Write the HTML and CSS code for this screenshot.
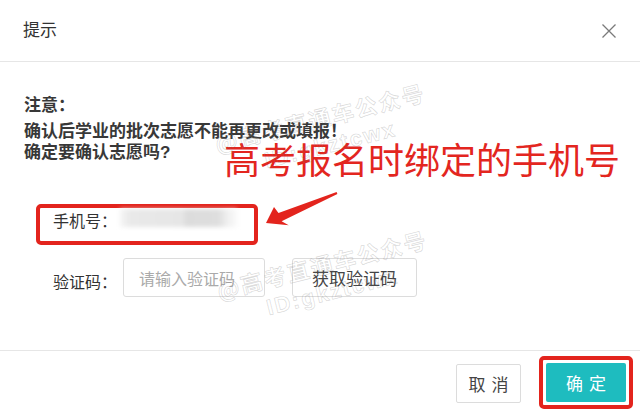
FILE: index.html
```html
<!DOCTYPE html>
<html lang="zh-CN">

<head>
  <meta charset="UTF-8">
  <meta name="viewport" content="width=device-width, initial-scale=1.0">
  <title>提示</title>
  <link rel="stylesheet" href="styles.css">
</head>

<body>
  <div class="dialog">
    <div class="dialog-header">
      <span class="dialog-title">提示</span>
      <svg class="close" width="16" height="16" viewBox="0 0 16 16">
        <path d="M1.5 1.5L14.5 14.5M14.5 1.5L1.5 14.5" />
      </svg>
    </div>

    <div class="dialog-body">
      <p class="note-title">注意：</p>
      <p class="note">确认后学业的批次志愿不能再更改或填报！</p>
      <p class="note">确定要确认志愿吗?</p>

      <div class="form">
        <div class="row phone-row">
          <span class="label">手机号：</span>
          <span class="phone-blur"></span>
        </div>
        <div class="row code-row">
          <span class="label">验证码：</span>
          <input class="code-input" type="text" placeholder="请输入验证码">
          <button class="btn-code">获取验证码</button>
        </div>
      </div>
    </div>

    <div class="dialog-footer">
      <button class="btn btn-cancel">取消</button>
      <div class="confirm-mark">
        <button class="btn btn-ok">确定</button>
      </div>
    </div>

    <!-- 标注 -->
    <div class="tip-text">高考报名时绑定的手机号</div>
    <svg class="tip-arrow" width="82" height="42" viewBox="0 0 82 42">
      <polygon points="6,35 14,19 18.5,25 76.6,4.1 77.4,5.9 21.6,33.3 28.7,37.3" />
    </svg>

    <!-- 水印 -->
    <div class="watermark wm-top">
      <div>@高考直通车公众号</div>
      <div class="wm-id">ID:gkztcwx</div>
    </div>
    <div class="watermark wm-bottom">
      <div>@高考直通车公众号</div>
      <div class="wm-id">ID:gkztcwx</div>
    </div>
  </div>
</body>

</html>
```

FILE: styles.css
```css
* {
  margin: 0;
  padding: 0;
  box-sizing: border-box;
}

body {
  font-family: "Noto Sans CJK SC", "Liberation Sans", sans-serif;
  color: #333;
  background: #fff;
}

.dialog {
  width: 640px;
  height: 412px;
  position: relative;
  overflow: hidden;
  display: flex;
  flex-direction: column;
}

/* 头部 */
.dialog-header {
  height: 62px;
  flex: none;
  border-bottom: 1px solid #e6e6e6;
  display: flex;
  align-items: center;
  justify-content: space-between;
  padding: 0 23px 4px 23px;
}

.dialog-title {
  font-size: 17px;
  color: #333;
}

.close {
  fill: none;
  stroke: #7a7a7a;
  stroke-width: 1.3;
  margin-top: 5px;
}

/* 内容 */
.dialog-body {
  flex: 1;
  padding: 33px 24px 0;
}

.note-title,
.note {
  font-family: "Liberation Sans", "Noto Sans CJK SC", sans-serif;
  font-size: 17px;
  font-weight: bold;
  line-height: 21px;
  color: #383838;
}

.note-title {
  margin-bottom: 5px;
}

.form {
  margin-top: 41px;
  padding-left: 12px;
}

.row {
  display: flex;
}

.label {
  font-size: 16px;
  color: #333;
  line-height: 24px;
  width: 70px;
}

.phone-row {
  width: 222px;
  height: 41px;
  border: 4px solid #e3241d;
  border-radius: 5px;
  padding-left: 13px;
  align-items: flex-start;
}

.phone-row .label {
  width: 67px;
}

.phone-blur {
  width: 117px;
  height: 18px;
  margin-top: 1px;
  background: linear-gradient(90deg, #f5f5f5 0, #e9e9e9 9%, #e6e6e6 54%, #dcdcdc 56%, #dedede 84%, #f0f0f0 92%, #fafafa 100%);
  filter: blur(2px);
}

.code-row {
  margin-top: 13px;
  padding-left: 17px;
  align-items: center;
}

.code-row .label {
  margin-top: 6px;
}

.code-input {
  width: 142px;
  height: 39px;
  border: 1px solid #dcdcdc;
  border-radius: 3px;
  padding-left: 15px;
  font-family: inherit;
  font-size: 16px;
  color: #333;
  outline: none;
}

.code-input::placeholder {
  color: #aaa;
}

.btn-code {
  margin-left: 27px;
  width: 125px;
  height: 39px;
  border: 1px solid #dcdcdc;
  border-radius: 3px;
  background: #fff;
  font-family: inherit;
  font-size: 17px;
  color: #444;
}

/* 底部 */
.dialog-footer {
  height: 62px;
  flex: none;
  border-top: 1px solid #e6e6e6;
  display: flex;
  justify-content: flex-end;
  align-items: flex-start;
  padding: 5px 7px 0 0;
}

.btn {
  height: 39px;
  border-radius: 2px;
  font-family: inherit;
  font-size: 17px;
  letter-spacing: 6px;
  text-indent: 6px;
}

.btn-cancel {
  margin-top: 8px;
  margin-right: 18px;
  width: 65px;
  border: 1px solid #dcdcdc;
  background: #fff;
  color: #444;
}

.confirm-mark {
  border: 4px solid #e3241d;
  border-radius: 5px;
  padding: 3px 3px;
}

.btn-ok {
  display: block;
  width: 80px;
  border: none;
  background: #1ebcbf;
  color: #fff;
}

/* 标注文字和箭头 */
.tip-text {
  position: absolute;
  left: 224px;
  top: 144px;
  font-family: "Liberation Sans", "Noto Sans CJK SC", sans-serif;
  font-size: 36px;
  line-height: 36px;
  color: #e3261f;
  white-space: nowrap;
}

.tip-arrow {
  position: absolute;
  left: 260px;
  top: 188px;
  fill: #e3241d;
}

/* 水印 */
.watermark {
  position: absolute;
  font-size: 22px;
  line-height: 30px;
  letter-spacing: 2px;
  font-weight: bold;
  color: transparent;
  -webkit-text-stroke: 0.7px rgba(120, 120, 120, 0.28);
  transform: rotate(-14deg);
  transform-origin: 0 15px;
  white-space: nowrap;
  pointer-events: none;
}

.wm-id {
  padding-left: 44px;
  font-family: "Liberation Sans", sans-serif;
}

.wm-top {
  left: 215px;
  top: 128px;
}

.wm-bottom {
  left: 217px;
  top: 275px;
}
```
